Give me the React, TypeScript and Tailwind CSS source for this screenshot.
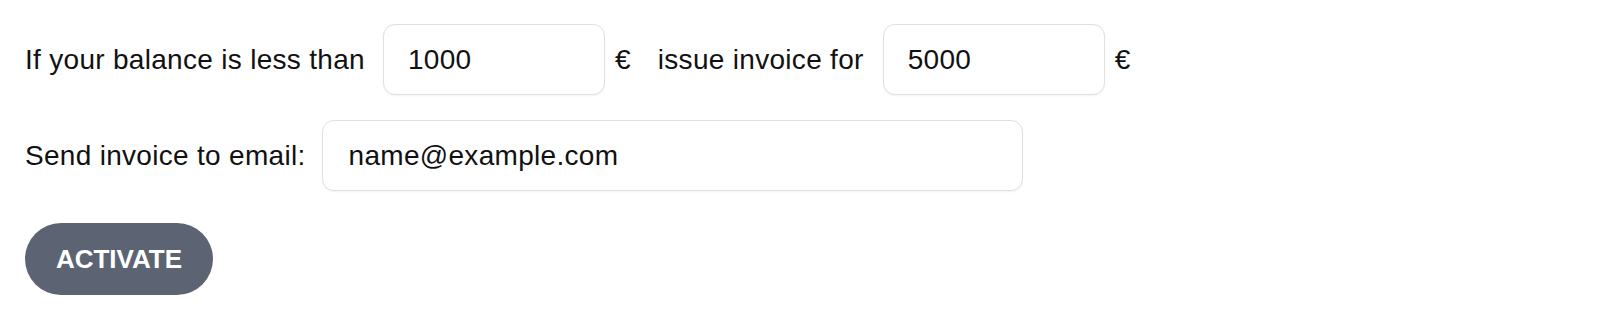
const fieldClass =
  'h-[71px] rounded-[12px] border border-[#e0e0e0] bg-white px-6 text-[28px] tracking-[0.3px] text-[#111111] outline-none shadow-[0_1px_2px_rgba(0,0,0,0.05)]';

const ThresholdRow = () => {
  return (
    <div className="flex items-center">
      <span>If your balance is less than</span>
      <input className={`${fieldClass} ml-[18px] w-[222px]`} defaultValue="1000" />
      <span className="ml-[10px]">€</span>
      <span className="ml-[27px]">issue invoice for</span>
      <input className={`${fieldClass} ml-[19px] w-[222px]`} defaultValue="5000" />
      <span className="ml-[10px]">€</span>
    </div>
  );
};

const EmailRow = () => {
  return (
    <div className="mt-[25px] flex items-center">
      <span>Send invoice to email:</span>
      <input
        className={`${fieldClass} ml-[16px] h-[69px] w-[701px] pl-[26px]`}
        defaultValue="name@example.com"
      />
    </div>
  );
};

export default function App() {
  return (
    <div
      className="min-h-screen bg-white pl-[25px] pt-[24px] text-[28px] tracking-[0.3px] text-[#111111]"
      style={{ fontFamily: '"Liberation Sans", Arial, sans-serif' }}
    >
      <ThresholdRow />
      <EmailRow />
      <button className="mt-[32px] h-[72px] w-[188px] rounded-full bg-[#5c6474] text-[26px] font-bold tracking-normal text-white">
        ACTIVATE
      </button>
    </div>
  );
}
